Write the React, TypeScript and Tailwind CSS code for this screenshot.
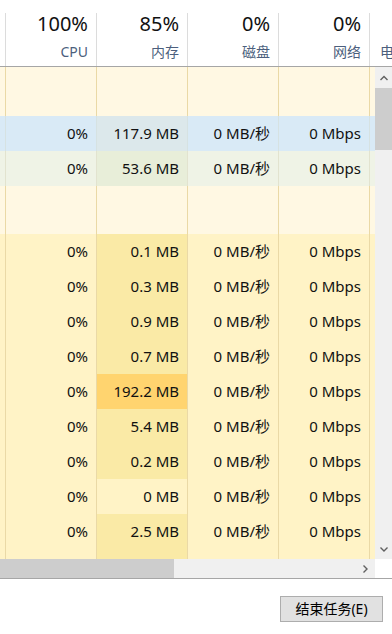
import React from "react";

type Row = {
  h: string;
  bg: string;
  memBg?: string;
  line: string;
  cpu?: string;
  mem?: string;
  disk?: string;
  net?: string;
};

const FONT = { fontFamily: '"Noto Sans", "Noto Sans CJK SC", sans-serif' };

const heat = "bg-[#fff3c6]";
const heatMem = "bg-[#faeaa6]";
const tan = "border-[#ead9a6]";

const rows: Row[] = [
  { h: "h-[49px]", bg: "bg-[#fff8e3]", line: tan },
  {
    h: "h-[35px]",
    bg: "bg-[#d9eaf6]",
    memBg: "bg-[#dce8eb]",
    line: "border-[#d6e2e2]",
    cpu: "0%",
    mem: "117.9 MB",
    disk: "0 MB/秒",
    net: "0 Mbps",
  },
  {
    h: "h-[35px]",
    bg: "bg-[#eff3e6]",
    memBg: "bg-[#e8eed9]",
    line: "border-[#e2e3cf]",
    cpu: "0%",
    mem: "53.6 MB",
    disk: "0 MB/秒",
    net: "0 Mbps",
  },
  { h: "h-[48px]", bg: "bg-[#fff8e3]", line: tan },
  ...["0.1 MB", "0.3 MB", "0.9 MB", "0.7 MB", "192.2 MB", "5.4 MB", "0.2 MB", "0 MB", "2.5 MB"].map(
    (mem): Row => ({
      h: "h-[35px]",
      bg: heat,
      memBg: mem === "192.2 MB" ? "bg-[#ffd46f]" : mem === "0 MB" ? heat : heatMem,
      line: tan,
      cpu: "0%",
      mem,
      disk: "0 MB/秒",
      net: "0 Mbps",
    })
  ),
  // next row, only its top edge shows above the scrollbar
  { h: "h-[35px]", bg: heat, memBg: heatMem, line: tan },
];

const Cell = ({ value, bg, line }: { value?: string; bg: string; line: string }) => (
  <div className={`flex h-full w-[91px] shrink-0 items-center justify-end border-l pr-[8px] ${bg} ${line}`}>
    {value}
  </div>
);

const Chevron = ({ d }: { d: string }) => (
  <svg width="10" height="10" viewBox="0 0 10 10" fill="none">
    <path d={d} stroke="#606060" strokeWidth="1.4" />
  </svg>
);

export default function App() {
  return (
    <div className="h-[634px] w-[392px] overflow-hidden bg-white text-[15px] text-[#111]" style={FONT}>
      {/* header */}
      <div className="flex h-[67px] overflow-hidden border-b border-[#a6a6a6]">
        <div className="w-[5px] shrink-0" />
        {[
          ["100%", "CPU"],
          ["85%", "内存"],
          ["0%", "磁盘"],
          ["0%", "网络"],
        ].map(([pct, label]) => (
          <div key={label} className="relative h-full w-[91px] shrink-0">
            <div className="absolute bottom-0 left-0 top-[13px] border-l border-[#dcdcdc]" />
            <div className="flex flex-col items-end pr-[8px]">
              <div className="mt-[11px] text-[20px] leading-[25px]">{pct}</div>
              <div className="mt-[7px] text-[14px] leading-[18px] text-[#4c5f7d]">{label}</div>
            </div>
          </div>
        ))}
        <div className="relative h-full w-[91px] shrink-0">
          <div className="absolute bottom-0 left-0 top-[13px] border-l border-[#dcdcdc]" />
          <div className="whitespace-nowrap pl-[11px] pt-[43px] text-[14px] leading-[18px] text-[#4c5f7d]">
            电源使用情况
          </div>
        </div>
      </div>

      {/* body */}
      <div className="flex h-[492px]">
        <div className="w-[375px] overflow-hidden">
          {rows.map((r, i) => (
            <div key={i} className={`flex w-[470px] ${r.h}`}>
              <div className={`h-full w-[5px] shrink-0 ${r.bg}`} />
              <Cell value={r.cpu} bg={r.bg} line={r.line} />
              <Cell value={r.mem} bg={r.memBg ?? r.bg} line={r.line} />
              <Cell value={r.disk} bg={r.bg} line={r.line} />
              <Cell value={r.net} bg={r.bg} line={r.line} />
              <Cell bg={r.bg} line={r.line} />
            </div>
          ))}
        </div>
        <div className="flex w-[17px] flex-col bg-[#f0f0f0]">
          <div className="flex h-[21px] items-center justify-center">
            <Chevron d="M1.5 7 L5 3.5 L8.5 7" />
          </div>
          <div className="h-[62px] bg-[#cdcdcd]" />
          <div className="flex-1" />
          <div className="flex h-[21px] items-center justify-center">
            <Chevron d="M1.5 3.5 L5 7 L8.5 3.5" />
          </div>
        </div>
      </div>

      {/* horizontal scrollbar */}
      <div className="flex h-[20px] border-b border-[#a6a6a6]">
        <div className="flex w-[375px] bg-[#f0f0f0]">
          <div className="w-[174px] bg-[#cdcdcd]" />
          <div className="flex-1" />
          <div className="flex w-[21px] items-center justify-center">
            <Chevron d="M3.5 1.5 L7 5 L3.5 8.5" />
          </div>
        </div>
        <div className="w-[17px] bg-white" />
      </div>

      {/* footer */}
      <div className="flex justify-end pr-[9px] pt-[17px]">
        <button className="h-[26px] w-[103px] border border-[#adadad] bg-[#e1e1e1] text-[14px] leading-[24px] text-black">
          结束任务(E)
        </button>
      </div>
    </div>
  );
}
